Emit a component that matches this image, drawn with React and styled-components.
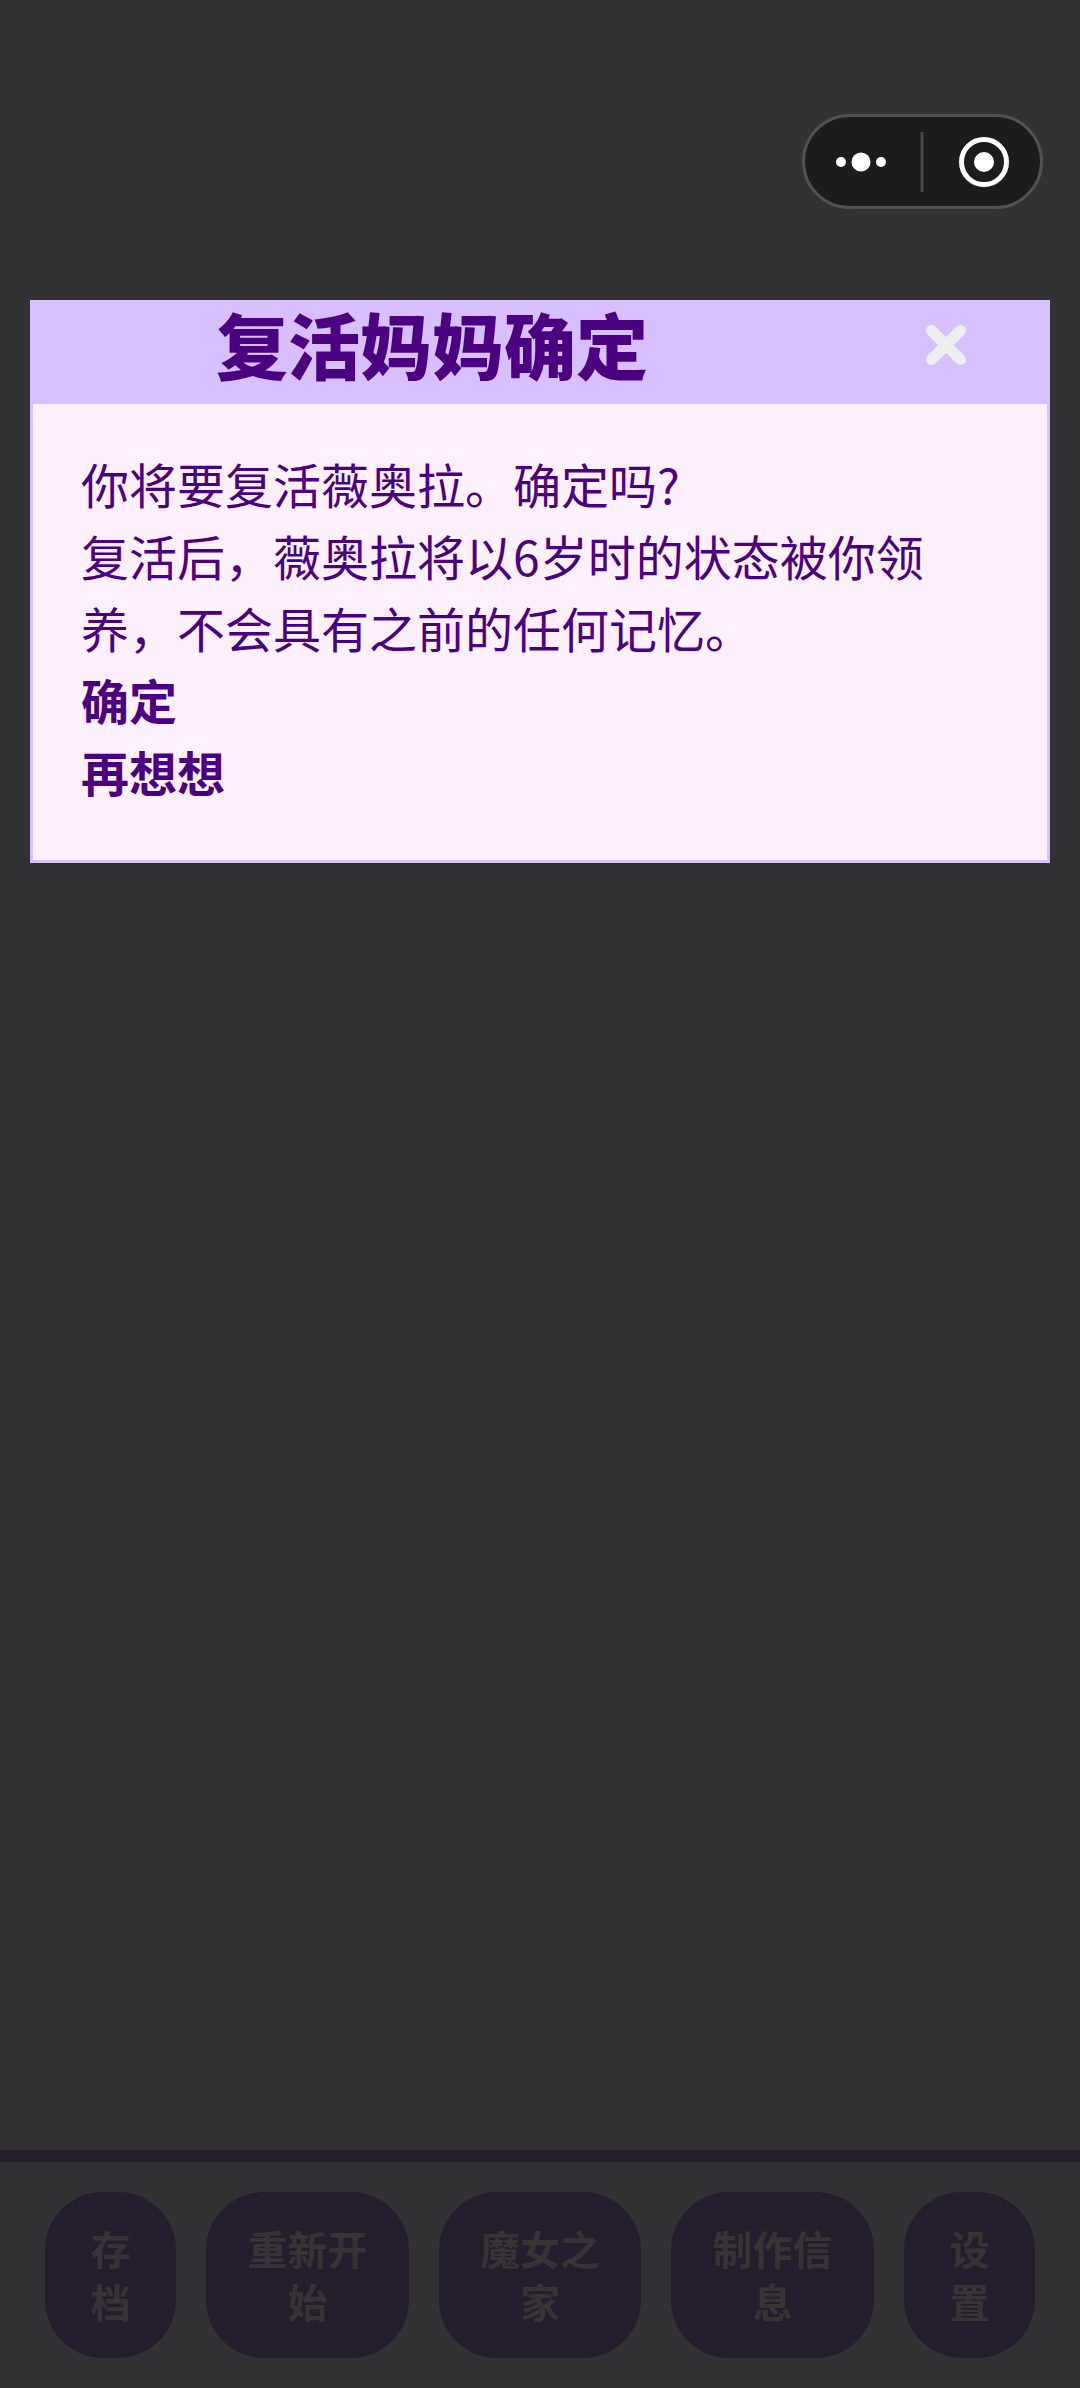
import React from "react";
import styled, { createGlobalStyle } from "styled-components";

const Global = createGlobalStyle`
  html, body { margin: 0; padding: 0; background: #323234; }
  body { font-family: "Noto Sans CJK SC", "Noto Sans", sans-serif; }
`;

const Page = styled.div`
  position: relative;
  width: 1080px;
  height: 2388px;
  overflow: hidden;
  display: flex;
  flex-direction: column;
  background: #323234;
`;

const Capsule = styled.div`
  position: absolute;
  left: 802px;
  top: 114px;
  width: 241px;
  height: 95px;
  box-sizing: border-box;
  border: 3px solid #525254;
  border-radius: 48px;
  background: #1c1c1e;
`;

const CapsuleIcons = styled.svg`
  display: block;
  position: absolute;
  left: -3px;
  top: -3px;
`;

const Modal = styled.section`
  margin: 300px 30px 0;
  height: 563px;
  box-sizing: border-box;
  border: 3px solid #d8bfff;
  background: #fff0ff;
  display: flex;
  flex-direction: column;
`;

const ModalHeader = styled.header`
  position: relative;
  height: 101px;
  flex: none;
  background: #d8bfff;
  display: flex;
  align-items: flex-start;
  padding-left: 183px;
`;

const ModalTitle = styled.h1`
  margin: -6px 0 0;
  font-size: 72px;
  line-height: 92px;
  font-weight: 900;
  color: #4b0082;
`;

const CloseIcon = styled.svg`
  position: absolute;
  left: 889px;
  top: 18px;
`;

const ModalBody = styled.div`
  padding: 43px 100px 0 48px;
  font-size: 48px;
  line-height: 72px;
  color: #4b0082;
`;

const Line = styled.div``;

const Action = styled.div`
  font-weight: 700;
`;

const BottomBar = styled.footer`
  margin-top: auto;
  height: 238px;
  box-sizing: border-box;
  border-top: 12px solid #231d2e;
  padding: 30px 45px 0;
  display: grid;
  grid-template-columns: 131px 203px 202px 203px 131px;
  column-gap: 30px;
  align-items: start;
`;

const BarButton = styled.div`
  height: 166px;
  border-radius: 58px;
  background: #231d2e;
  display: flex;
  align-items: center;
  justify-content: center;
`;

const BarLabel = styled.span`
  display: block;
  max-width: ${(p) => p.$chars}em;
  font-size: 40px;
  line-height: 53px;
  font-weight: 700;
  text-align: center;
  color: #373436;
`;

const buttons = [
  ["存档", 1],
  ["重新开始", 3],
  ["魔女之家", 3],
  ["制作信息", 3],
  ["设置", 1],
];

export default function App() {
  return (
    <Page>
      <Global />
      <Capsule>
        <CapsuleIcons width="241" height="95" viewBox="0 0 241 95">
          <circle cx="39" cy="48" r="5" fill="#fff" />
          <circle cx="59" cy="48" r="9.5" fill="#fff" />
          <circle cx="79" cy="48" r="5" fill="#fff" />
          <rect x="118.5" y="18" width="3" height="60" fill="#48484a" />
          <circle cx="182" cy="48" r="22.5" fill="none" stroke="#fff" strokeWidth="5" />
          <circle cx="182" cy="48" r="10" fill="#fff" />
        </CapsuleIcons>
      </Capsule>
      <Modal>
        <ModalHeader>
          <ModalTitle>复活妈妈确定</ModalTitle>
          <CloseIcon width="48" height="48" viewBox="0 0 48 48">
            <path d="M9.5 9.5 L38.5 38.5 M38.5 9.5 L9.5 38.5" stroke="#eeeeee" strokeWidth="11" strokeLinecap="round" />
          </CloseIcon>
        </ModalHeader>
        <ModalBody>
          <Line>你将要复活薇奥拉。确定吗?</Line>
          <Line>复活后，薇奥拉将以6岁时的状态被你领养，不会具有之前的任何记忆。</Line>
          <Action>确定</Action>
          <Action>再想想</Action>
        </ModalBody>
      </Modal>
      <BottomBar>
        {buttons.map(([text, chars]) => (
          <BarButton key={text}>
            <BarLabel $chars={chars}>{text}</BarLabel>
          </BarButton>
        ))}
      </BottomBar>
    </Page>
  );
}
